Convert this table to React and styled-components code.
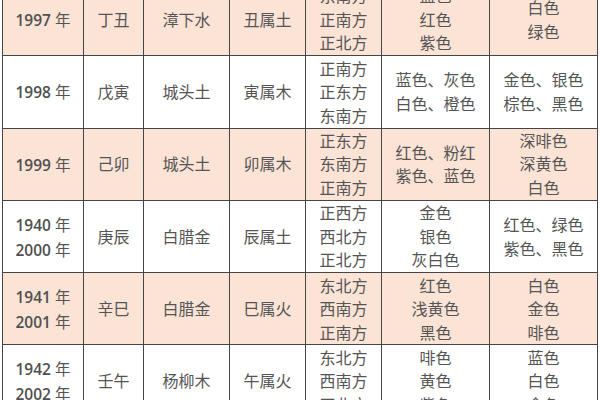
import React from "react";
import styled, { createGlobalStyle } from "styled-components";

const Global = createGlobalStyle`
  html, body { margin: 0; padding: 0; background: #ffffff; }
  body { width: 600px; height: 400px; overflow: hidden; }
`;

const Frame = styled.div`
  width: 600px;
  height: 400px;
  overflow: hidden;
  padding-left: 2px;
  box-sizing: border-box;
`;

const Table = styled.table`
  border-collapse: collapse;
  table-layout: fixed;
  width: 596px;
  margin-top: -17px;
`;

const Row = styled.tr`
  height: 72.3px;
  background: ${(p) => (p.$shaded ? "#fbe3d6" : "#ffffff")};
`;

const Cell = styled.td`
  border: 1.5px solid #454545;
  padding: 0;
  text-align: center;
  vertical-align: middle;
  font-family: "Noto Sans CJK SC", sans-serif;
  font-size: 16px;
  line-height: 23.5px;
  color: #555555;
  white-space: nowrap;
`;

const YearCell = styled(Cell)`
  font-family: "Open Sans", "Noto Sans CJK SC", sans-serif;
  font-size: 15.5px;
  font-weight: 600;
  color: #505050;
  line-height: 24px;
`;

const YearUnit = styled.span`
  font-family: "Noto Sans CJK SC", sans-serif;
  font-weight: 400;
  color: #555555;
`;

const Line = styled.div``;

const widths = [81, 60, 86, 76, 76, 108, 108];

const rows = [
  {
    year: ["1997"],
    gz: "丁丑",
    ny: "漳下水",
    sx: "丑属土",
    dir: ["东南方", "正南方", "正北方"],
    c1: ["蓝色", "红色", "紫色"],
    c2: ["白色", "绿色"],
  },
  {
    year: ["1998"],
    gz: "戊寅",
    ny: "城头土",
    sx: "寅属木",
    dir: ["正南方", "正东方", "东南方"],
    c1: ["蓝色、灰色", "白色、橙色"],
    c2: ["金色、银色", "棕色、黑色"],
  },
  {
    year: ["1999"],
    gz: "己卯",
    ny: "城头土",
    sx: "卯属木",
    dir: ["正东方", "东南方", "正南方"],
    c1: ["红色、粉红", "紫色、蓝色"],
    c2: ["深啡色", "深黄色", "白色"],
  },
  {
    year: ["1940", "2000"],
    gz: "庚辰",
    ny: "白腊金",
    sx: "辰属土",
    dir: ["正西方", "西北方", "正北方"],
    c1: ["金色", "银色", "灰白色"],
    c2: ["红色、绿色", "紫色、黑色"],
  },
  {
    year: ["1941", "2001"],
    gz: "辛巳",
    ny: "白腊金",
    sx: "巳属火",
    dir: ["东北方", "西南方", "正南方"],
    c1: ["红色", "浅黄色", "黑色"],
    c2: ["白色", "金色", "啡色"],
  },
  {
    year: ["1942", "2002"],
    gz: "壬午",
    ny: "杨柳木",
    sx: "午属火",
    dir: ["东北方", "西南方", "正北方"],
    c1: ["啡色", "黄色", "紫色"],
    c2: ["蓝色", "白色", "金色"],
  },
];

const Lines = ({ items }) => items.map((t, i) => <Line key={i}>{t}</Line>);

export default function App() {
  return (
    <Frame>
      <Global />
      <Table>
        <colgroup>
          {widths.map((w, i) => (
            <col key={i} style={{ width: w }} />
          ))}
        </colgroup>
        <tbody>
          {rows.map((r, i) => (
            <Row key={i} $shaded={i % 2 === 0}>
              <YearCell>
                {r.year.map((y) => (
                  <Line key={y}>
                    {y} <YearUnit>年</YearUnit>
                  </Line>
                ))}
              </YearCell>
              <Cell>{r.gz}</Cell>
              <Cell>{r.ny}</Cell>
              <Cell>{r.sx}</Cell>
              <Cell>
                <Lines items={r.dir} />
              </Cell>
              <Cell>
                <Lines items={r.c1} />
              </Cell>
              <Cell>
                <Lines items={r.c2} />
              </Cell>
            </Row>
          ))}
        </tbody>
      </Table>
    </Frame>
  );
}
